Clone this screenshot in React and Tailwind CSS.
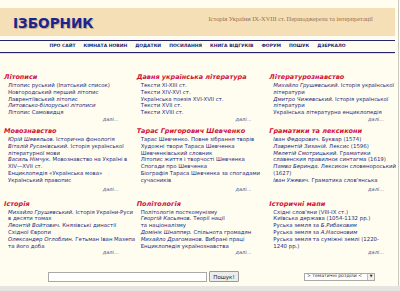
import React from "react";

const I = ({ children }) => <i className="italic">{children}</i>;

const rows = [
  [
    {
      title: "Літописи",
      items: [
        <>Літопис руський (Іпатський список)</>,
        <>Новгородський перший літопис</>,
        <>Лаврентіївський літопис</>,
        <I>Литовсько-білоруські літописи</I>,
        <>Літопис Самовидця</>,
      ],
    },
    {
      title: "Давня українська література",
      items: [
        <>Тексти XI-XIII ст.</>,
        <>Тексти XIV-XVI ст.</>,
        <>Українська поезія XVI-XVII ст.</>,
        <>Тексти XVII ст.</>,
        <>Тексти XVIII ст.</>,
      ],
    },
    {
      title: "Літературознавство",
      items: [
        <><I>Михайло Грушевський.</I> Історія української<br />літератури</>,
        <><I>Дмитро Чижевський.</I> Історія української<br />літератури</>,
        <>Українська літературна енциклопедія</>,
      ],
    },
  ],
  [
    {
      title: "Мовознавство",
      items: [
        <><I>Юрій Шевельов.</I> Історична фонологія</>,
        <><I>Віталій Русанівський.</I> Історія української<br />літературної мови</>,
        <><I>Василь Німчук.</I> Мовознавство на Україні в<br />XIV—XVII ст.</>,
        <>Енциклопедія «Українська мова»</>,
        <>Український правопис</>,
      ],
    },
    {
      title: "Тарас Григорович Шевченко",
      items: [
        <>Тарас Шевченко. Повне зібрання творів</>,
        <>Художні твори Тараса Шевченка</>,
        <>Шевченківський словник</>,
        <>Літопис життя і творчості Шевченка</>,
        <>Спогади про Шевченка</>,
        <>Біографія Тараса Шевченка за спогадами<br />сучасників</>,
      ],
    },
    {
      title: "Граматики та лексикони",
      items: [
        <><I>Іван Федорович.</I> Буквар (1574)</>,
        <><I>Лаврентій Зизаній.</I> Лексис (1596)</>,
        <><I>Мелетій Смотрицький.</I> Граматики<br />славенския правилноє синтагма (1619)</>,
        <><I>Памво Беринда.</I> Лексикон словенороський<br />(1627)</>,
        <><I>Іван Ужевич.</I> Граматика слов'янська</>,
      ],
    },
  ],
  [
    {
      title: "Історія",
      items: [
        <><I>Михайло Грушевський.</I> Історія України-Руси<br />в десяти томах</>,
        <><I>Леонтій Войтович.</I> Князівські династії<br />Східної Європи</>,
        <><I>Олександер Оглоблин.</I> Гетьман Іван Мазепа<br />та його доба</>,
      ],
    },
    {
      title: "Політологія",
      items: [
        <>Політологія посткомунізму</>,
        <><I>Георгій Касьянов.</I> Теорії нації<br />та націоналізму</>,
        <><I>Домінік Шнаппер.</I> Спільнота громадян</>,
        <><I>Михайло Драгоманов.</I> Вибрані праці</>,
        <>Енциклопедія українознавства</>,
      ],
    },
    {
      title: "Історичні мапи",
      items: [
        <>Східні слов'яни (VIII-IX ст.)</>,
        <>Київська держава (1054-1132 рр.)</>,
        <>Руська земля за <I>Б.Рибаковим</I></>,
        <>Руська земля за <I>А.Насоновим</I></>,
        <>Руська земля та суміжні землі (1220-<br />1240 рр.)</>,
      ],
    },
  ],
];

const nav = [
  "ПРО САЙТ",
  "КІМНАТА НОВИН",
  "ДОДАТКИ",
  "ПОСИЛАННЯ",
  "КНИГА ВІДГУКІВ",
  "ФОРУМ",
  "ПОШУК",
  "ДЗЕРКАЛО",
];

function Cell({ title, items, moreGap }) {
  return (
    <div className="flex flex-col">
      <div className="h-[9px] leading-[9px] text-[6.5px] font-bold italic text-[#d0103a] whitespace-nowrap">
        {title}
      </div>
      <div className="pl-[4px] text-[5.4px] leading-[6.8px] text-[#1e2b7a] whitespace-nowrap">
        {items.map((it, i) => (
          <div key={i}>{it}</div>
        ))}
      </div>
      <div
        className={`${moreGap ? "mt-[2px]" : "mt-0"} text-right text-[5px] leading-[7px] italic text-[#4a5080]`}
      >
        далі...
      </div>
    </div>
  );
}

export default function App() {
  return (
    <div className="w-[400px] h-[291px] overflow-hidden bg-[#fffdf0] font-['DejaVu_Sans',sans-serif] flex flex-col">
      <div className="flex-1 w-[399px] border-r border-[#c9c9c0] flex flex-col">
        <div className="h-[8px]" />
        <div className="h-[28px] mr-[3px] bg-[#f4dfb6] flex items-start">
          <div className="ml-[13px] mt-[8px] text-[13.6px] leading-[14px] font-bold text-[#1c2490] [text-shadow:1px_1px_0_#c2ad88] whitespace-nowrap">
            ІЗБОРНИК
          </div>
          <div className="ml-[115px] mt-[7px] text-[6.4px] leading-[7px] font-['Liberation_Serif',serif] text-[#9a6d50] whitespace-nowrap">
            Історія України IX-XVIII ст. Першоджерела та інтерпретації
          </div>
        </div>
        <div className="h-[4px]" />
        <div className="mr-[3px] border-t border-b border-[#23236e] h-[13px] flex items-center justify-center gap-[8px] text-[4.5px] font-bold text-[#1c2470] whitespace-nowrap">
          {nav.map((n) => (
            <span key={n}>{n}</span>
          ))}
        </div>
        <div className="mr-[3px] h-[1px] bg-[#e4e0cc]" />
        <div className="pt-[19px] pl-[4px] pr-[14px] flex flex-col">
          {rows.map((row, ri) => (
            <div
              key={ri}
              className={`grid grid-cols-3 gap-x-[18px] ${ri === 1 ? "mt-[4px]" : ri === 2 ? "mt-[7px]" : ""}`}
            >
              {row.map((c, ci) => (
                <Cell key={ci} {...c} moreGap={ri === 1} />
              ))}
            </div>
          ))}
        </div>
        <div className="mt-[15px] flex items-center">
          <div className="ml-[48px] w-[159px] h-[10px] bg-white border border-[#a9a9a9]" />
          <div className="ml-[2px] w-[30px] h-[11px] bg-[#ececec] border border-[#9a9a9a] rounded-[1px] flex items-center justify-center text-[5.5px] text-[#222]">
            Пошук!
          </div>
          <div className="ml-[65px] w-[71px] h-[8px] bg-white border border-[#a9a9a9] flex items-center text-[4.6px] text-[#222]">
            <span className="pl-[2px] flex-1 whitespace-nowrap">&gt; тематичні розділи &lt;</span>
            <span className="w-[7px] h-full border-l border-[#c0c0c0] bg-[#f0f0f0] flex items-center justify-center text-[3.5px]">
              ▼
            </span>
          </div>
        </div>
      </div>
      <div className="h-[5px] bg-[#e4e4e0]" />
    </div>
  );
}
